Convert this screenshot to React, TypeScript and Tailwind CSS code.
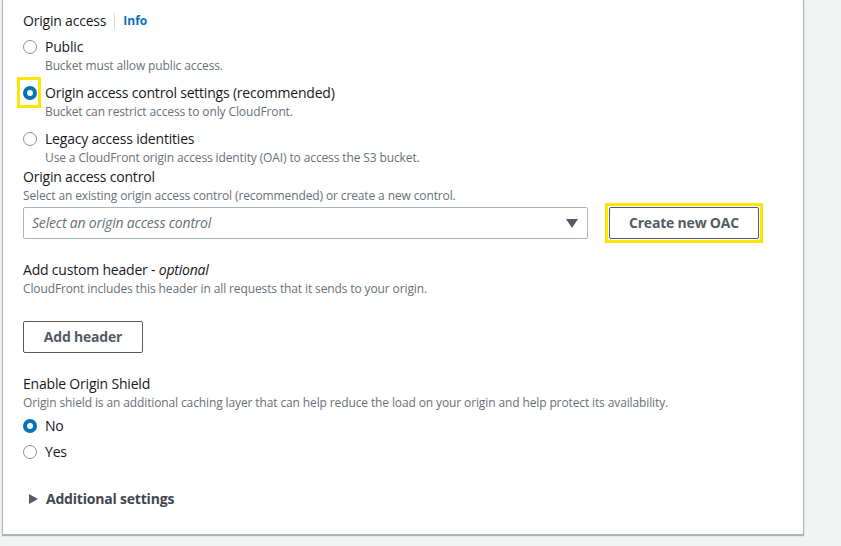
import React from "react";

const font = { fontFamily: '"Open Sans", "Noto Sans", Arial, sans-serif' };

const Radio = ({ checked }: { checked?: boolean }) =>
  checked ? (
    <span className="inline-flex h-[14px] w-[14px] items-center justify-center rounded-full bg-[#0073bb]">
      <span className="h-[6px] w-[6px] rounded-full bg-white" />
    </span>
  ) : (
    <span className="inline-block h-[14px] w-[14px] rounded-full border-[1.5px] border-[#879596] bg-white" />
  );

const Option = ({
  label,
  desc,
  checked,
  highlight,
  className,
}: {
  label: string;
  desc?: string;
  checked?: boolean;
  highlight?: boolean;
  className?: string;
}) => (
  <div className={className}>
    <div className="flex h-[20px] items-center">
      <div className="relative flex w-[22px] items-center">
        <Radio checked={checked} />
        {highlight && (
          <span className="absolute left-[-6px] top-[-9px] h-[31px] w-[24px] border-[3px] border-[#ffe600]" />
        )}
      </div>
      <span className="text-[14px] tracking-[-0.2px] text-[#16191f]">{label}</span>
    </div>
    {desc && (
      <div className="mt-[1px] pl-[22px] text-[12px] leading-[16px] tracking-[-0.12px] text-[#687078]">{desc}</div>
    )}
  </div>
);

const Button = ({ children, className }: { children: React.ReactNode; className?: string }) => (
  <button
    className={`h-[32px] rounded-[2px] border border-[#545b64] bg-white text-[14px] font-bold tracking-[-0.2px] text-[#545b64] ${className ?? ""}`}
  >
    {children}
  </button>
);

export default function App() {
  return (
    <div className="h-[546px] w-[841px] overflow-hidden bg-[#f2f3f3]" style={font}>
      <div className="ml-[2px] h-[535px] w-[802px] border-b border-l border-r border-[#aab7b8] bg-white px-[20px] pt-[11px] leading-[20px] shadow-[0_1px_1px_0_rgba(0,28,36,0.3)]">
        <div className="flex h-[20px] items-center text-[14px] tracking-[-0.2px] text-[#16191f]">
          <span>Origin access</span>
          <span className="ml-[8px] mr-[8px] h-[16px] w-px bg-[#d5dbdb]" />
          <span className="text-[12px] font-bold tracking-normal text-[#0073bb]">Info</span>
        </div>

        <Option className="mt-[6px]" label="Public" desc="Bucket must allow public access." />
        <Option
          className="mt-[9px]"
          label="Origin access control settings (recommended)"
          desc="Bucket can restrict access to only CloudFront."
          checked
          highlight
        />
        <Option
          className="mt-[9px]"
          label="Legacy access identities"
          desc="Use a CloudFront origin access identity (OAI) to access the S3 bucket."
        />

        <div className="mt-[1px] text-[14px] tracking-[-0.2px] text-[#16191f]">Origin access control</div>
        <div className="mt-[1px] text-[12px] leading-[16px] tracking-[-0.12px] text-[#687078]">
          Select an existing origin access control (recommended) or create a new control.
        </div>

        <div className="mt-[3px] flex h-[32px] items-center">
          <div className="flex h-[32px] w-[565px] shrink-0 items-center justify-between rounded-[2px] border border-[#aab7b8] pl-[8px] pr-[9px]">
            <span className="text-[14px] italic tracking-[-0.2px] text-[#687078]">Select an origin access control</span>
            <svg width="12" height="9" viewBox="0 0 12 9">
              <path d="M0 0h12L6 9z" fill="#545b64" />
            </svg>
          </div>
          <div className="ml-[17px] shrink-0 border-[3px] border-[#ffe600] p-px">
            <Button className="block w-[150px]">Create new OAC</Button>
          </div>
        </div>

        <div className="mt-[21px] text-[14px] tracking-[-0.2px] text-[#16191f]">
          Add custom header - <i>optional</i>
        </div>
        <div className="mt-[1px] text-[12px] leading-[16px] tracking-[-0.12px] text-[#687078]">
          CloudFront includes this header in all requests that it sends to your origin.
        </div>
        <Button className="mt-[24px] block w-[120px]">Add header</Button>

        <div className="mt-[21px] text-[14px] tracking-[-0.2px] text-[#16191f]">Enable Origin Shield</div>
        <div className="mt-[1px] text-[12px] leading-[16px] tracking-[-0.12px] text-[#687078]">
          Origin shield is an additional caching layer that can help reduce the load on your origin and help protect its availability.
        </div>
        <Option className="mt-[5px]" label="No" checked />
        <Option className="mt-[6px]" label="Yes" />

        <div className="mt-[27px] flex h-[20px] items-center pl-[6px]">
          <svg width="9" height="10" viewBox="0 0 9 10">
            <path d="M0 0l9 5-9 5z" fill="#545b64" />
          </svg>
          <span className="ml-[8px] text-[14px] font-bold tracking-[-0.2px] text-[#414750]">Additional settings</span>
        </div>
      </div>
    </div>
  );
}
